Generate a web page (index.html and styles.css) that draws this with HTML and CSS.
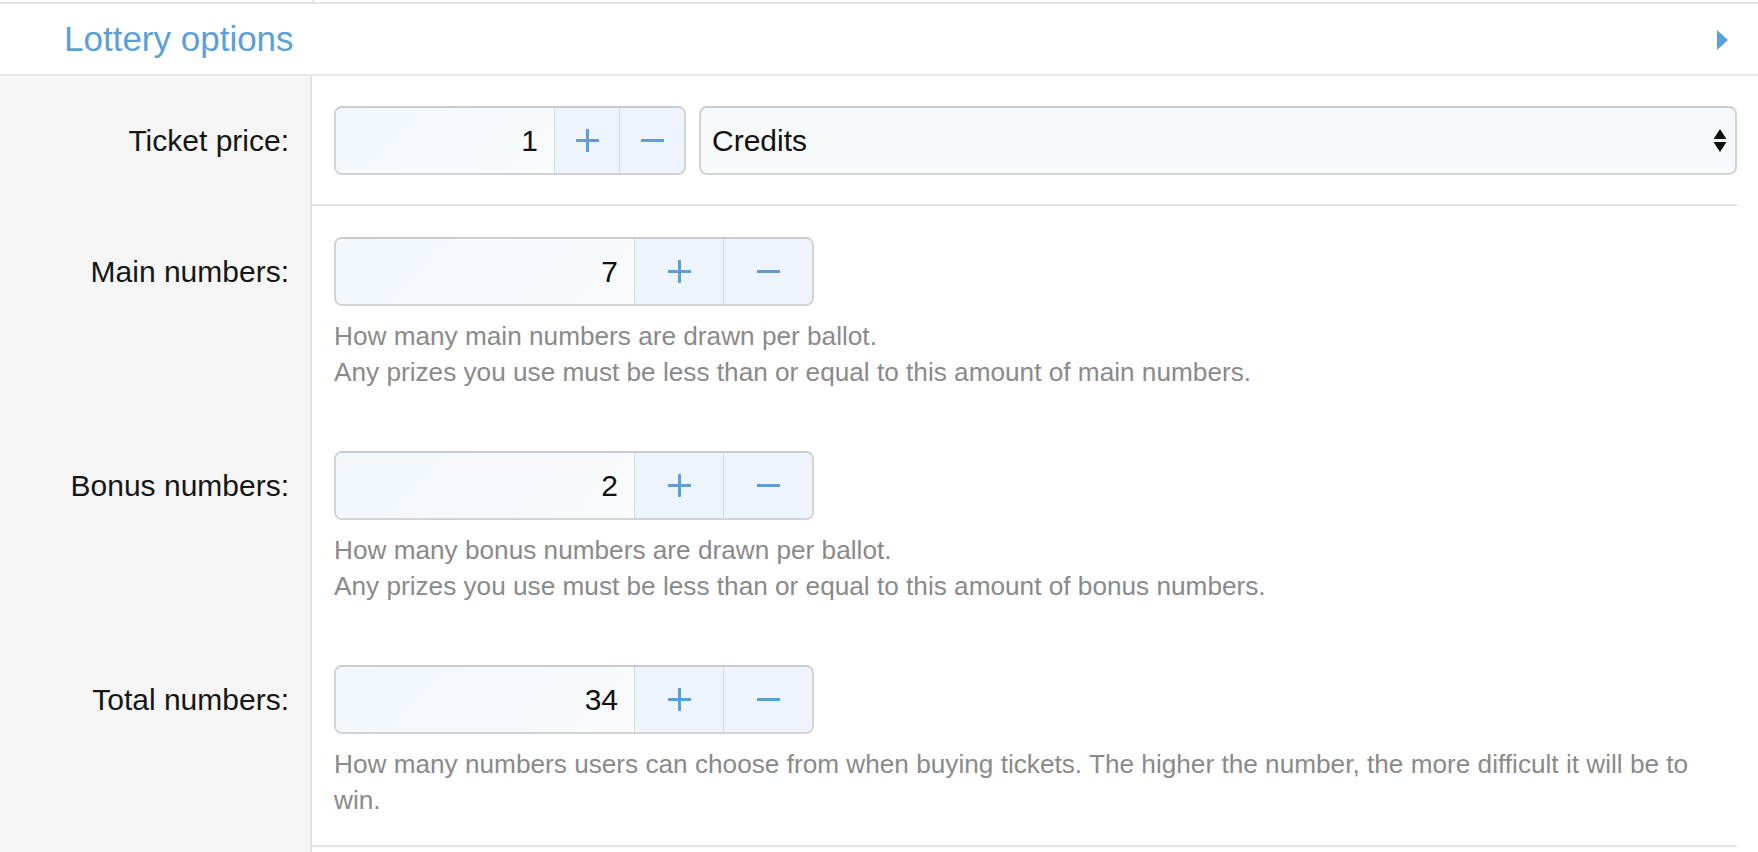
FILE: index.html
```html
<!DOCTYPE html>
<html lang="en">
<head>
<meta charset="utf-8">
<title>Lottery options</title>
<link rel="stylesheet" href="styles.css">
</head>
<body>
<div class="prev"><div class="prev-side"></div></div>
<div class="header">
  <h2 class="title">Lottery options</h2>
  <svg class="caret" width="11" height="20" viewBox="0 0 11 20"><path d="M0 0 L11 10 L0 20 Z" fill="#5b9fd8"/></svg>
</div>
<div class="form">
  <div class="row">
    <div class="label">Ticket price:</div>
    <div class="content content-sep">
      <div class="inline">
        <div class="stepper stepper-small">
          <div class="field">1</div>
          <div class="btn"><svg width="23" height="23" viewBox="0 0 23 23"><path d="M11.5 0 V23 M0 11.5 H23" stroke="#5b9fd8" stroke-width="3"/></svg></div>
          <div class="btn"><svg width="23" height="23" viewBox="0 0 23 23"><path d="M0 11.5 H23" stroke="#5b9fd8" stroke-width="3"/></svg></div>
        </div>
        <div class="select">
          <span>Credits</span>
          <svg width="14" height="24" viewBox="0 0 14 24"><path d="M7 0 L13.5 10 L0.5 10 Z M0.5 13 L13.5 13 L7 23 Z" fill="#111"/></svg>
        </div>
      </div>
    </div>
  </div>
  <div class="row">
    <div class="label">Main numbers:</div>
    <div class="content">
      <div class="stepper stepper-wide">
        <div class="field">7</div>
        <div class="btn"><svg width="23" height="23" viewBox="0 0 23 23"><path d="M11.5 0 V23 M0 11.5 H23" stroke="#5b9fd8" stroke-width="3"/></svg></div>
        <div class="btn"><svg width="23" height="23" viewBox="0 0 23 23"><path d="M0 11.5 H23" stroke="#5b9fd8" stroke-width="3"/></svg></div>
      </div>
      <p class="help">How many main numbers are drawn per ballot.<br>Any prizes you use must be less than or equal to this amount of main numbers.</p>
    </div>
  </div>
  <div class="row">
    <div class="label">Bonus numbers:</div>
    <div class="content">
      <div class="stepper stepper-wide">
        <div class="field">2</div>
        <div class="btn"><svg width="23" height="23" viewBox="0 0 23 23"><path d="M11.5 0 V23 M0 11.5 H23" stroke="#5b9fd8" stroke-width="3"/></svg></div>
        <div class="btn"><svg width="23" height="23" viewBox="0 0 23 23"><path d="M0 11.5 H23" stroke="#5b9fd8" stroke-width="3"/></svg></div>
      </div>
      <p class="help">How many bonus numbers are drawn per ballot.<br>Any prizes you use must be less than or equal to this amount of bonus numbers.</p>
    </div>
  </div>
  <div class="row">
    <div class="label">Total numbers:</div>
    <div class="content content-sep content-last">
      <div class="stepper stepper-wide">
        <div class="field">34</div>
        <div class="btn"><svg width="23" height="23" viewBox="0 0 23 23"><path d="M11.5 0 V23 M0 11.5 H23" stroke="#5b9fd8" stroke-width="3"/></svg></div>
        <div class="btn"><svg width="23" height="23" viewBox="0 0 23 23"><path d="M0 11.5 H23" stroke="#5b9fd8" stroke-width="3"/></svg></div>
      </div>
      <p class="help">How many numbers users can choose from when buying tickets. The higher the number, the more difficult it will be to win.</p>
    </div>
  </div>
  <div class="row row-tail">
    <div class="label label-tail"></div>
    <div class="content content-tail"></div>
  </div>
</div>
</body>
</html>
```
FILE: styles.css
```css
html, body {
  margin: 0;
  padding: 0;
  background: #ffffff;
  font-family: "Liberation Sans", Arial, Helvetica, sans-serif;
}

.prev {
  height: 2px;
  border-bottom: 2px solid #e2e2e2;
  display: flex;
}

.prev-side {
  width: 312px;
  border-right: 2px solid #e2e2e2;
}

.header {
  height: 70px;
  border-bottom: 2px solid #e6e6e6;
  display: flex;
  align-items: center;
  justify-content: space-between;
  padding: 0 30px 0 64px;
}

.title {
  margin: 0;
  font-size: 35px;
  font-weight: normal;
  line-height: 70px;
  color: #5b9fd8;
}

.caret {
  display: block;
  margin-top: 2px;
}

.form {
  display: flex;
  flex-direction: column;
}

.row {
  display: flex;
}

.label {
  width: 312px;
  box-sizing: border-box;
  flex: none;
  background: #f5f5f5;
  border-right: 2px solid #e2e2e2;
  text-align: right;
  padding: 31px 21px 0 0;
  font-size: 30px;
  line-height: 69px;
  color: #161616;
}

.row:first-child .label {
  padding-top: 30px;
}

.content {
  flex: 1;
  margin-right: 21px;
  padding: 31px 0 30px 22px;
}

.row:first-child .content {
  padding-top: 30px;
  padding-bottom: 29px;
}

.content-sep {
  border-bottom: 2px solid #e3e3e3;
}

.content-last {
  padding-bottom: 27px;
}

.row-tail {
  height: 40px;
}

.label-tail {
  padding: 0;
  line-height: 0;
}

.content-tail {
  padding: 0;
}

.inline {
  display: flex;
  gap: 13px;
}

.stepper {
  display: flex;
  height: 69px;
  box-sizing: border-box;
  border: 2px solid #d3d3d3;
  border-top-color: #cbcbcb;
  border-radius: 8px;
  overflow: hidden;
  background: #f5f9fc;
}

.stepper-small {
  width: 352px;
  flex: none;
}

.stepper-wide {
  width: 480px;
}

.field {
  flex: 1;
  text-align: right;
  padding-right: 16px;
  font-size: 30px;
  line-height: 65px;
  color: #111111;
  background: linear-gradient(135deg, #f2f7fc 0%, #f9fbfd 100%);
}

.btn {
  flex: none;
  display: flex;
  align-items: center;
  justify-content: center;
  border-left: 1px solid #d6d9dc;
  background: #edf4fb;
}

.stepper-small .btn {
  width: 64px;
}

.stepper-wide .btn {
  width: 88px;
}

.btn svg {
  display: block;
}

.select {
  flex: 1;
  height: 69px;
  box-sizing: border-box;
  border: 2px solid #d3d3d3;
  border-top-color: #cbcbcb;
  border-radius: 8px;
  background: #f7fafc;
  display: flex;
  align-items: center;
  justify-content: space-between;
  padding: 0 8px 0 11px;
  font-size: 30px;
  color: #111111;
}

.select svg {
  display: block;
}

.help {
  margin: 12px 0 0 0;
  max-width: 1380px;
  font-size: 26.2px;
  line-height: 36px;
  color: #8a8a8a;
}
```
